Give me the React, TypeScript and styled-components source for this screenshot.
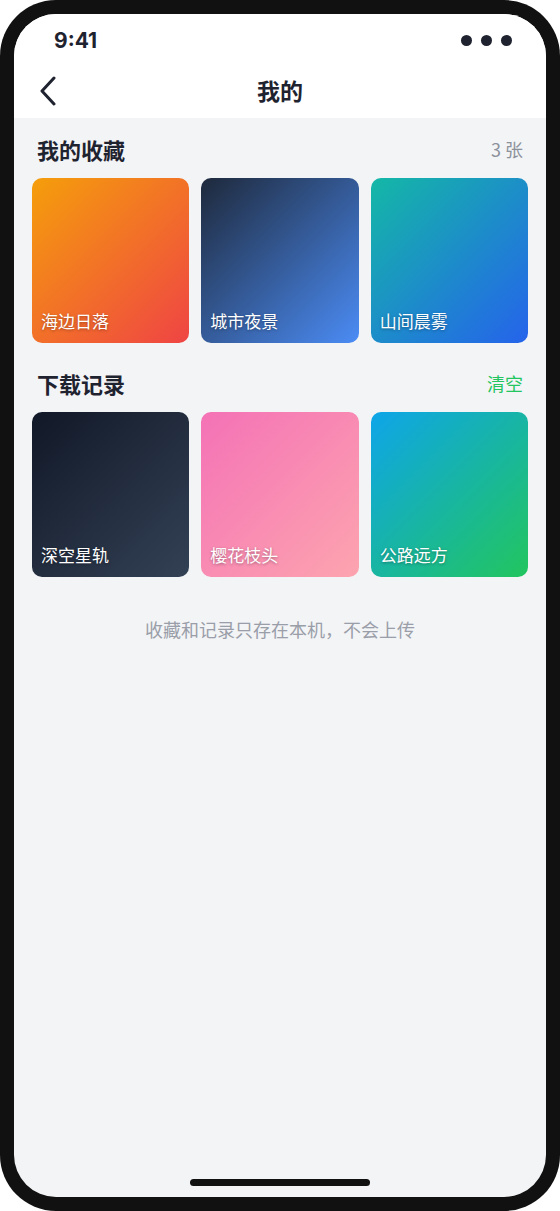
import React from 'react';
import styled, { createGlobalStyle } from 'styled-components';

const GlobalStyle = createGlobalStyle`
  html, body {
    margin: 0;
    padding: 0;
    background: #ffffff;
  }
  body {
    font-family: "Inter", "Noto Sans CJK SC", sans-serif;
  }
  * {
    box-sizing: border-box;
  }
`;

const Phone = styled.div`
  width: 560px;
  height: 1211px;
  padding: 14px;
  background: #111111;
  border-radius: 56px;
`;

const Screen = styled.div`
  height: 100%;
  background: #f3f4f6;
  border-radius: 42px;
  overflow: hidden;
  display: flex;
  flex-direction: column;
`;

const StatusBar = styled.div`
  height: 50px;
  padding: 0 34px 0 40px;
  display: flex;
  align-items: center;
  justify-content: space-between;
  background: #ffffff;
`;

const Clock = styled.span`
  font-family: "Inter", sans-serif;
  font-size: 21px;
  font-weight: 700;
  color: #1f2330;
  margin-top: 2px;
`;

const Dots = styled.div`
  display: flex;
  gap: 9px;
  margin-top: 2px;
`;

const Dot = styled.span`
  width: 11px;
  height: 11px;
  border-radius: 50%;
  background: #1f2330;
`;

const NavBar = styled.div`
  height: 54px;
  background: #ffffff;
  display: grid;
  grid-template-columns: 60px 1fr 60px;
  align-items: center;
`;

const BackButton = styled.button`
  border: none;
  background: none;
  padding: 0 0 0 24px;
  height: 100%;
  display: flex;
  align-items: center;
  cursor: pointer;
  color: #1f2330;
`;

const NavTitle = styled.h1`
  margin: 0 0 2px;
  text-align: center;
  font-family: "Noto Sans CJK SC", sans-serif;
  font-size: 23px;
  font-weight: 700;
  color: #1f2330;
`;

const Content = styled.div`
  flex: 1;
  padding: 16px 18px 0;
  display: flex;
  flex-direction: column;
`;

const SectionHeader = styled.div<{ $first?: boolean }>`
  height: 30px;
  padding: 0 5px;
  margin-top: ${(p) => (p.$first ? '0' : '25px')};
  margin-bottom: 14px;
  display: flex;
  align-items: center;
  justify-content: space-between;
`;

const SectionTitle = styled.h2`
  margin: 0;
  font-family: "Noto Sans CJK SC", sans-serif;
  font-size: 22px;
  font-weight: 700;
  color: #1f2330;
`;

const SectionAside = styled.span<{ $accent?: boolean }>`
  font-family: "Noto Sans CJK SC", sans-serif;
  font-size: 18px;
  color: ${(p) => (p.$accent ? '#22c55e' : '#8c919b')};
  cursor: ${(p) => (p.$accent ? 'pointer' : 'default')};
`;

const Grid = styled.div`
  display: grid;
  grid-template-columns: repeat(3, 1fr);
  gap: 12px;
`;

const Card = styled.div<{ $from: string; $to: string }>`
  height: 165px;
  border-radius: 10px;
  background: linear-gradient(135deg, ${(p) => p.$from} 0%, ${(p) => p.$to} 100%);
  display: flex;
  align-items: flex-end;
  padding: 0 9px 10px;
`;

const CardLabel = styled.span`
  font-family: "Noto Sans CJK SC", sans-serif;
  font-size: 17px;
  color: #ffffff;
  text-shadow: 0 1px 3px rgba(0, 0, 0, 0.35);
`;

const Footnote = styled.p`
  margin: 40px 0 0;
  text-align: center;
  font-family: "Noto Sans CJK SC", sans-serif;
  font-size: 18px;
  line-height: 24px;
  color: #9a9ea8;
`;

const HomeBar = styled.div`
  flex-shrink: 0;
  height: 28px;
  padding-top: 10px;
  display: flex;
  align-items: flex-start;
  justify-content: center;
`;

const HomeIndicator = styled.span`
  width: 180px;
  height: 7px;
  border-radius: 4px;
  background: #111111;
`;

type Picture = { name: string; from: string; to: string };

const favorites: Picture[] = [
  { name: '海边日落', from: '#f59e0b', to: '#ef4444' },
  { name: '城市夜景', from: '#1e293b', to: '#4b8cf5' },
  { name: '山间晨雾', from: '#14b8a6', to: '#2563eb' },
];

const downloads: Picture[] = [
  { name: '深空星轨', from: '#111827', to: '#334155' },
  { name: '樱花枝头', from: '#f472b6', to: '#fda4af' },
  { name: '公路远方', from: '#0ea5e9', to: '#22c55e' },
];

const PictureGrid = ({ items }: { items: Picture[] }) => (
  <Grid>
    {items.map((item) => (
      <Card key={item.name} $from={item.from} $to={item.to}>
        <CardLabel>{item.name}</CardLabel>
      </Card>
    ))}
  </Grid>
);

const App: React.FC = () => {
  return (
    <>
      <GlobalStyle />
      <Phone>
        <Screen>
          <StatusBar>
            <Clock>9:41</Clock>
            <Dots>
              <Dot />
              <Dot />
              <Dot />
            </Dots>
          </StatusBar>

          <NavBar>
            <BackButton aria-label="返回">
              <svg width="20" height="30" viewBox="0 0 20 30" fill="none">
                <path d="M16 2 L4 15 L16 28" stroke="currentColor" strokeWidth="3" strokeLinecap="round" strokeLinejoin="round" />
              </svg>
            </BackButton>
            <NavTitle>我的</NavTitle>
            <span />
          </NavBar>

          <Content>
            <SectionHeader $first>
              <SectionTitle>我的收藏</SectionTitle>
              <SectionAside>3 张</SectionAside>
            </SectionHeader>
            <PictureGrid items={favorites} />

            <SectionHeader>
              <SectionTitle>下载记录</SectionTitle>
              <SectionAside $accent>清空</SectionAside>
            </SectionHeader>
            <PictureGrid items={downloads} />

            <Footnote>收藏和记录只存在本机，不会上传</Footnote>
          </Content>

          <HomeBar>
            <HomeIndicator />
          </HomeBar>
        </Screen>
      </Phone>
    </>
  );
};

export default App;
